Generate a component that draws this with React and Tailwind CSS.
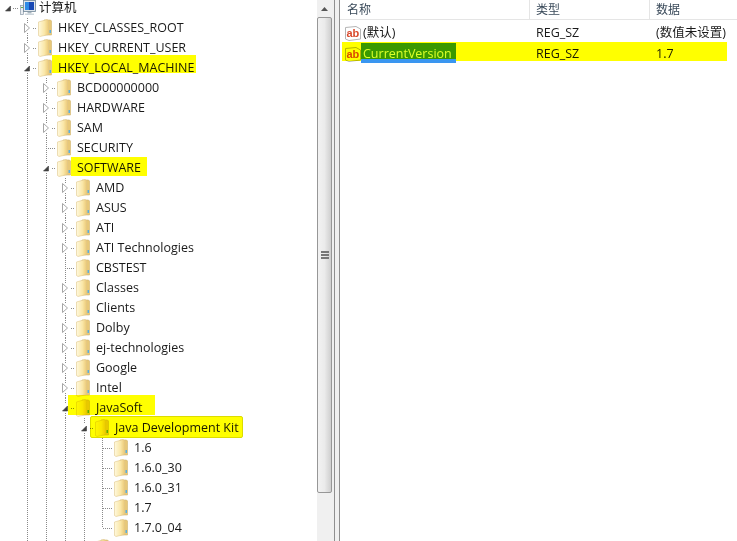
const FONT = "font-['Open_Sans','Noto_Sans_CJK_SC',sans-serif]";

// depth = tree level, lines = guide columns that pass through the row
const rows = [
  { label: '计算机', depth: 0, kind: 'computer', exp: 'open' },
  { label: 'HKEY_CLASSES_ROOT', depth: 1, exp: 'closed' },
  { label: 'HKEY_CURRENT_USER', depth: 1, exp: 'closed' },
  { label: 'HKEY_LOCAL_MACHINE', depth: 1, exp: 'open', hl: 'left-[52px] w-[144px] top-[-3px] h-[18px]' },
  { label: 'BCD00000000', depth: 2, exp: 'closed', lines: [1] },
  { label: 'HARDWARE', depth: 2, exp: 'closed', lines: [1] },
  { label: 'SAM', depth: 2, exp: 'closed', lines: [1] },
  { label: 'SECURITY', depth: 2, lines: [1] },
  { label: 'SOFTWARE', depth: 2, exp: 'open', lines: [1], hl: 'left-[71px] w-[76px] top-[-1px] h-[19px]' },
  { label: 'AMD', depth: 3, exp: 'closed', lines: [1, 2] },
  { label: 'ASUS', depth: 3, exp: 'closed', lines: [1, 2] },
  { label: 'ATI', depth: 3, exp: 'closed', lines: [1, 2] },
  { label: 'ATI Technologies', depth: 3, exp: 'closed', lines: [1, 2] },
  { label: 'CBSTEST', depth: 3, lines: [1, 2] },
  { label: 'Classes', depth: 3, exp: 'closed', lines: [1, 2] },
  { label: 'Clients', depth: 3, exp: 'closed', lines: [1, 2] },
  { label: 'Dolby', depth: 3, exp: 'closed', lines: [1, 2] },
  { label: 'ej-technologies', depth: 3, exp: 'closed', lines: [1, 2] },
  { label: 'Google', depth: 3, exp: 'closed', lines: [1, 2] },
  { label: 'Intel', depth: 3, exp: 'closed', lines: [1, 2] },
  { label: 'JavaSoft', depth: 3, exp: 'open', lines: [1, 2], hl: 'left-[68px] w-[87px] top-[-3px] h-[20px]' },
  { label: 'Java Development Kit', depth: 4, exp: 'open', lines: [1, 2, 3], hl: 'left-[90px] w-[153px] top-[-2px] h-[22px] rounded-[2px] border border-[#dcdc00]' },
  { label: '1.6', depth: 5, lines: [1, 2, 3, 4, 5] },
  { label: '1.6.0_30', depth: 5, lines: [1, 2, 3, 4, 5] },
  { label: '1.6.0_31', depth: 5, lines: [1, 2, 3, 4, 5] },
  { label: '1.7', depth: 5, lines: [1, 2, 3, 4, 5] },
  { label: '1.7.0_04', depth: 5, lines: [1, 2, 3, 4], last: true },
  { label: '', depth: 4, lines: [1, 2, 3] },
];

const guideX = (k) => (k === 5 ? 102.5 : 8.5 + 19 * k);

const Folder = () => (
  <svg width="14" height="18" viewBox="0 0 14 18" className="shrink-0">
    <defs>
      <linearGradient id="folderFront" x1="0" y1="0" x2="1" y2="0">
        <stop offset="0" stopColor="#fff9de" />
        <stop offset="0.6" stopColor="#fae7a8" />
        <stop offset="1" stopColor="#ecca78" />
      </linearGradient>
    </defs>
    <path d="M6 1 L12.5 1 L13.5 2 L13.5 16 L6 16 Z" fill="#e8c878" stroke="#d2b572" strokeWidth="0.6" />
    <path d="M0.5 3 L9 0.5 L10.5 1.5 L10.5 15.5 L2 17.5 L0.5 16.5 Z" fill="url(#folderFront)" stroke="#e0c88c" strokeWidth="0.6" />
    <rect x="11.5" y="11" width="1.5" height="3" fill="#58aee0" />
  </svg>
);

const Computer = () => (
  <svg width="16" height="16" viewBox="0 0 16 16" className="shrink-0">
    <rect x="0.5" y="5.5" width="3" height="9" fill="#e8edf2" stroke="#8a9aa8" strokeWidth="0.7" />
    <rect x="1" y="7" width="2" height="1" fill="#5fb04a" />
    <rect x="3.5" y="0.5" width="12" height="11" fill="#dfe6ec" stroke="#6f8496" strokeWidth="0.8" />
    <rect x="5" y="2" width="9" height="8" fill="#1748b4" />
    <rect x="5" y="2" width="4" height="8" fill="#2f8be6" />
    <rect x="7.5" y="12" width="4" height="1.5" fill="#aab6c0" />
    <rect x="5" y="13.5" width="9" height="1.5" fill="#ccd5dc" />
  </svg>
);

// dotted tree guides, the elbow and the expander arrow, drawn per row
const Gutter = ({ row, iconX }) => {
  const cx = 8 + 19 * row.depth;
  const dotted = { stroke: '#8a8a8a', strokeDasharray: '1 1' };
  return (
    <svg width={iconX} height="20" className="shrink-0">
      {(row.lines || []).map((k) => (
        <line key={k} x1={guideX(k)} x2={guideX(k)} y1="0" y2="20" {...dotted} />
      ))}
      {row.last && <line x1="102.5" x2="102.5" y1="0" y2="10" {...dotted} />}
      {row.depth > 0 && row.depth < 5 && !row.exp && (
        <line x1={cx + 0.5} x2={cx + 0.5} y1="0" y2="20" {...dotted} />
      )}
      {row.depth > 0 && row.exp && (
        <>
          <line x1={cx + 0.5} x2={cx + 0.5} y1="0" y2="5" {...dotted} />
          <line x1={cx + 0.5} x2={cx + 0.5} y1="15" y2="20" {...dotted} />
        </>
      )}
      {row.depth > 0 && (
        <line x1={row.exp ? cx + 6 : cx} x2={iconX - 1} y1="10.5" y2="10.5" {...dotted} />
      )}
      {row.exp === 'closed' && <path d={`M${cx - 2.5} 5.5 L${cx + 2.5} 10 L${cx - 2.5} 14.5 Z`} fill="#fff" stroke="#a6a6a6" />}
      {row.exp === 'open' && row.depth > 0 && (
        <path d={`M${cx - 2.5} 13 L${cx + 2.5} 13 L${cx + 2.5} 8 Z`} fill="#404040" stroke="#404040" strokeWidth="0.6" />
      )}
      {row.depth === 0 && (
        <>
          <path d="M5.5 13 L10.5 13 L10.5 8 Z" fill="#404040" stroke="#404040" strokeWidth="0.6" />
          <line x1="13" x2="19" y1="10.5" y2="10.5" {...dotted} />
        </>
      )}
    </svg>
  );
};

const TreeRow = ({ row }) => {
  const iconX = row.depth === 0 ? 20 : 19 + 19 * row.depth;
  return (
    <div className="relative flex h-5 items-center">
      <Gutter row={row} iconX={iconX} />
      {row.kind === 'computer' ? <Computer /> : <Folder />}
      <span className={`whitespace-nowrap text-[12.5px] leading-4 text-[#1a1a1a] ${row.depth === 0 ? 'ml-[3px]' : 'ml-[6px]'}`}>{row.label}</span>
      {row.hl && <span className={`absolute bg-[#ffff00] mix-blend-multiply ${row.hl}`} />}
    </div>
  );
};

const AbIcon = () => (
  <svg width="16" height="17" viewBox="0 0 16 17" className="shrink-0">
    <path d="M0.5 2.5 L11 1.5 L15.5 4 L15.5 14 L4 15.5 L0.5 14 Z" fill="#fff" stroke="#b5b5b5" />
    <text x="1.5" y="11.5" fontSize="11" fontWeight="700" fill="#d9482a" fontFamily="Liberation Sans, sans-serif">ab</text>
  </svg>
);

const ValueRow = ({ name, data, selected }) => (
  <div className="relative flex h-[21px] items-center">
    <div className="flex w-[196px] items-center pl-[5px]">
      <AbIcon />
      {selected ? (
        <span className="relative -top-px z-10 flex h-[21px] w-[95px] flex-col">
          <span className="h-4 bg-[#3a9900] pl-[2px] text-[12.5px] leading-[22px] text-[#dcff28]">{name}</span>
          <span className="h-[4px] bg-[#3a96f0]" />
        </span>
      ) : (
        <span className="ml-[2px] text-[12.5px] text-[#1a1a1a]">{name}</span>
      )}
    </div>
    <span className="w-[120px] text-[12.5px] text-[#1a1a1a]">REG_SZ</span>
    <span className="text-[12.5px] text-[#1a1a1a]">{data}</span>
    {selected && <span className="absolute left-[2px] top-[-2px] h-[19px] w-[385px] bg-[#ffff00] mix-blend-multiply" />}
  </div>
);

const Scrollbar = () => (
  <div className="flex w-[17px] shrink-0 flex-col bg-[#f0f0f0]">
    <div className="flex h-[17px] shrink-0 items-center justify-center pr-[2px]">
      <svg width="7" height="4" viewBox="0 0 7 4"><path d="M0 4 L3.5 0 L7 4 Z" fill="#555" /></svg>
    </div>
    <div className="mr-[2px] flex h-[476px] shrink-0 items-center justify-center rounded-[2px] border border-[#979797] bg-gradient-to-r from-[#f2f2f2] via-[#ebebeb] to-[#cfcfcf]">
      <div className="flex w-[8px] flex-col gap-[1px]">
        <div className="h-[2px] bg-[#777]" />
        <div className="h-[2px] bg-[#777]" />
        <div className="h-[2px] bg-[#777]" />
      </div>
    </div>
  </div>
);

const App = () => (
  <div className={`flex h-[541px] w-[737px] overflow-hidden bg-white ${FONT}`}>
    <div className="-mt-[2px] w-[317px] shrink-0 overflow-hidden">
      {rows.map((row, i) => (
        <TreeRow key={i} row={row} />
      ))}
    </div>
    <Scrollbar />
    <div className="w-[6px] shrink-0 border-x border-[#8f8f8f] bg-[#f0f0f0]" />
    <div className="min-w-0 flex-1">
      <div className="flex h-[20px] items-center border-b border-[#e5e5e5] text-[12px] text-[#3a4a5a]">
        <div className="flex h-full w-[190px] items-center border-r border-[#e5e5e5] pl-[7px]">名称</div>
        <div className="flex h-full w-[120px] items-center border-r border-[#e5e5e5] pl-[6px]">类型</div>
        <div className="flex h-full items-center pl-[6px]">数据</div>
      </div>
      <div className="pt-[3px]">
        <ValueRow name="(默认)" data="(数值未设置)" />
        <ValueRow name="CurrentVersion" data="1.7" selected />
      </div>
    </div>
  </div>
);

export default App;
